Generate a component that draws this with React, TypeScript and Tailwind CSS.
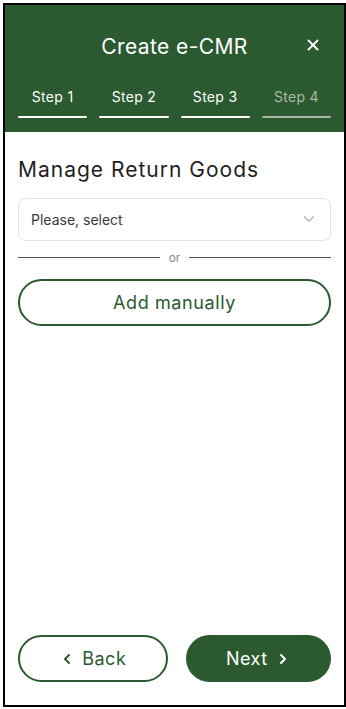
import { X, ChevronDown, ChevronLeft, ChevronRight } from "lucide-react";

const steps = [
  { label: "Step 1", done: true },
  { label: "Step 2", done: true },
  { label: "Step 3", done: true },
  { label: "Step 4", done: false },
];

export default function App() {
  return (
    <div className="bg-white pl-[3px] pt-[3px] h-[709px] w-[346px] font-['Inter',sans-serif]">
      <div className="flex h-[704px] w-[343px] flex-col border-2 border-black bg-white">
        <header className="flex h-[127px] flex-col bg-[#2b5a30] px-[13px]">
          <div className="relative flex h-[81px] items-center justify-center pt-[2px]">
            <h1 className="text-[21px] font-normal tracking-[0.4px] text-white">Create e-CMR</h1>
            <button className="absolute right-[9px] top-[31px] text-white">
              <X size={18} strokeWidth={2.5} />
            </button>
          </div>
          <div className="grid grid-cols-4 gap-x-[12px]">
            {steps.map((s) => (
              <div key={s.label} className="flex flex-col items-center">
                <span
                  className={
                    s.done
                      ? "text-[14px] tracking-[0.3px] text-white"
                      : "text-[14px] tracking-[0.3px] text-[#a9b8a9]"
                  }
                >
                  {s.label}
                </span>
                <span
                  className={
                    s.done
                      ? "mt-[9px] h-[2px] w-full rounded-full bg-white"
                      : "mt-[9px] h-[2px] w-full rounded-full bg-[#a9b4a9]"
                  }
                />
              </div>
            ))}
          </div>
        </header>

        <main className="flex flex-1 flex-col px-[13px]">
          <h2 className="mt-[22px] text-[21px] tracking-[1px] text-[#1f1f1f]">Manage Return Goods</h2>
          <button className="mt-[12px] flex h-[43px] items-center justify-between rounded-[8px] border border-[#e4e4e4] pl-[12px] pr-[12px] text-left">
            <span className="text-[14px] text-[#3a3a3a]">Please, select</span>
            <ChevronDown size={18} strokeWidth={1.75} className="text-[#b5b5b5]" />
          </button>
          <div className="mt-[11px] flex items-center gap-[9px]">
            <span className="h-px flex-1 bg-[#555]" />
            <span className="text-[12px] leading-none text-[#8a8a8a]">or</span>
            <span className="h-px flex-1 bg-[#555]" />
          </div>
          <button className="mt-[15px] flex h-[47px] items-center justify-center rounded-full border-2 border-[#2b5a30] text-[18px] tracking-[0.6px] text-[#2b5a30]">
            Add manually
          </button>

          <div className="mt-auto mb-[23px] flex gap-[18px]">
            <button className="flex h-[47px] flex-1 items-center justify-center gap-[7px] rounded-full border-2 border-[#2b5a30] text-[18px] tracking-[0.5px] text-[#2b5a30]">
              <ChevronLeft size={16} strokeWidth={3} />
              Back
            </button>
            <button className="flex h-[47px] flex-1 items-center justify-center gap-[7px] rounded-full bg-[#2b5a30] text-[18px] tracking-[0.5px] text-white">
              Next
              <ChevronRight size={16} strokeWidth={3} />
            </button>
          </div>
        </main>
      </div>
    </div>
  );
}
